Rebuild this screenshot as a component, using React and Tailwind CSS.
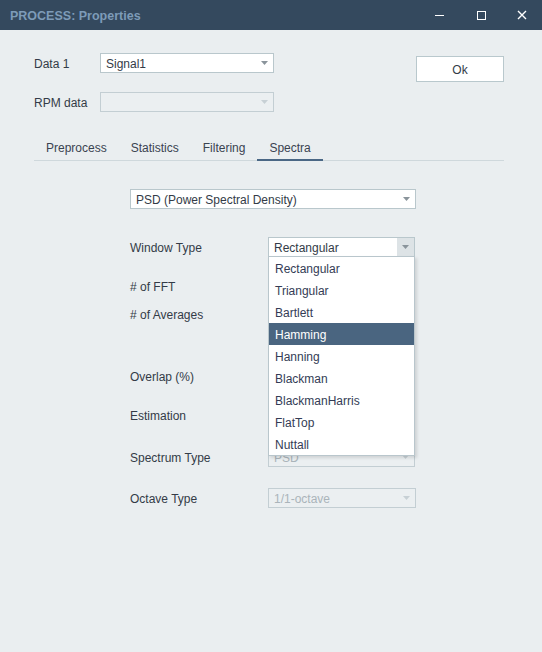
import React from "react";

function Arrow({ light }) {
  return (
    <svg width="7" height="4" viewBox="0 0 7 4" className="block">
      <path d="M0 0H7L3.5 4Z" fill={light ? "#c7d0d5" : "#8a949b"} />
    </svg>
  );
}

function Combo({ value, w, disabled, open }) {
  return (
    <div
      className={`${w} h-[20px] flex items-stretch border ${
        disabled ? "border-[#c3ced3] bg-[#ebeff1] text-[#aab4ba]" : "border-[#b9c7cc] bg-white text-[#333b47]"
      }`}
    >
      <div className="flex-1 flex items-center pl-[5px] pt-[2px] leading-none truncate">{value}</div>
      <div className={`w-[17px] flex items-center justify-center ${open ? "bg-[#dde3e6]" : ""}`}>
        <Arrow light={disabled} />
      </div>
    </div>
  );
}

const windows = [
  "Rectangular",
  "Triangular",
  "Bartlett",
  "Hamming",
  "Hanning",
  "Blackman",
  "BlackmanHarris",
  "FlatTop",
  "Nuttall",
];

function Row({ label, mt, children }) {
  return (
    <div className={`${mt} flex items-center h-[20px]`}>
      <div className="w-[138px] pt-[2px] text-[#333b47]">{label}</div>
      {children}
    </div>
  );
}

export default function App() {
  const tabs = ["Preprocess", "Statistics", "Filtering", "Spectra"];
  return (
    <div className="w-[542px] h-[652px] flex flex-col bg-[#eaeef0] font-['Liberation_Sans',Arial,sans-serif] text-[12px] text-[#333b47] overflow-hidden">
      {/* Title bar */}
      <div className="h-[30px] bg-[#34495e] flex items-center shrink-0">
        <div className="pl-[10px] pt-[2px] font-bold text-[12.5px] text-[#7d9bb8] flex-1">PROCESS: Properties</div>
        <div className="flex h-full">
          <div className="w-[42px] flex items-center justify-center">
            <div className="w-[9px] h-px bg-white" />
          </div>
          <div className="w-[42px] flex items-center justify-center">
            <div className="w-[9px] h-[9px] border border-white" />
          </div>
          <div className="w-[40px] flex items-center justify-center">
            <svg width="10" height="10" viewBox="0 0 10 10" className="block">
              <path d="M1 1L9 9M9 1L1 9" stroke="white" strokeWidth="1.4" />
            </svg>
          </div>
        </div>
      </div>

      {/* Body */}
      <div className="flex-1 pl-[34px] pr-[38px] pt-[23px]">
        <div className="flex justify-between items-start">
          <div className="flex items-center">
            <div className="w-[66px] pt-[2px]">Data 1</div>
            <Combo w="w-[174px]" value="Signal1" />
          </div>
          <button className="mt-[3px] w-[88px] h-[26px] pt-[2px] bg-white border border-[#b9c8cd] text-[#333b47] flex items-center justify-center">
            Ok
          </button>
        </div>
        <div className="mt-[10px] flex items-center">
          <div className="w-[66px] pt-[2px]">RPM data</div>
          <Combo w="w-[174px]" value="" disabled />
        </div>

        {/* Tabs */}
        <div className="mt-[23px] flex border-b border-[#cfd8dc]">
          {tabs.map((t) => (
            <div
              key={t}
              className={`h-[26px] -mb-px px-[12px] pt-[2px] flex items-center border-b-2 text-[#3a4350] ${
                t === "Spectra" ? "border-[#4a6785]" : "border-transparent"
              }`}
            >
              {t}
            </div>
          ))}
        </div>

        {/* Spectra tab */}
        <div className="ml-[96px] mt-[28px]">
          <Combo w="w-[286px]" value="PSD (Power Spectral Density)" />

          <Row label="Window Type" mt="mt-[28px]">
            <div className="relative">
              <Combo w="w-[147px]" value="Rectangular" open />
              <div className="absolute left-0 top-[19px] w-[147px] bg-white border border-[#b9c6cc] shadow-[2px_2px_3px_rgba(0,0,0,0.12)] z-10">
                {windows.map((n) => (
                  <div
                    key={n}
                    className={`h-[22px] flex items-center pl-[6px] pt-[2px] ${
                      n === "Hamming" ? "bg-[#4a6580] text-white" : "text-[#343c55]"
                    }`}
                  >
                    {n}
                  </div>
                ))}
              </div>
            </div>
          </Row>
          <Row label="# of FFT" mt="mt-[19px]" />
          <Row label="# of Averages" mt="mt-[8px]" />
          <Row label="Overlap (%)" mt="mt-[42px]" />
          <Row label="Estimation" mt="mt-[19px]" />
          <Row label="Spectrum Type" mt="mt-[22px]">
            <Combo w="w-[147px]" value="PSD" disabled />
          </Row>
          <Row label="Octave Type" mt="mt-[21px]">
            <Combo w="w-[148px]" value="1/1-octave" disabled />
          </Row>
        </div>
      </div>
    </div>
  );
}
